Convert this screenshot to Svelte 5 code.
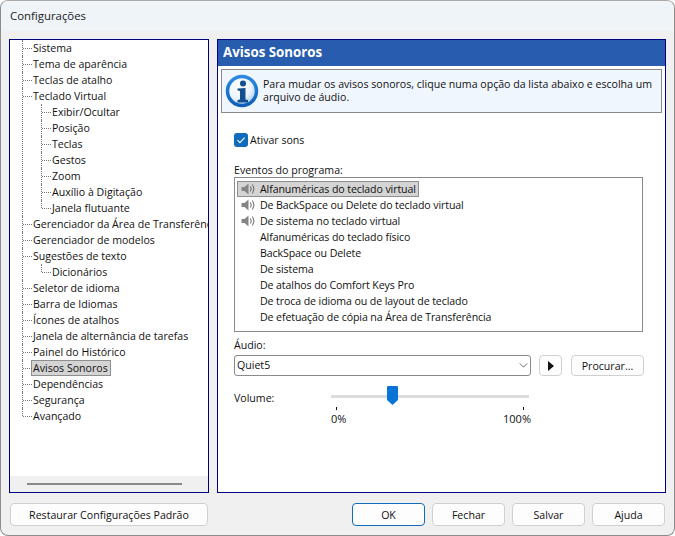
<script>
  // Árvore de categorias da janela
  const tree = [
    { label: 'Sistema' },
    { label: 'Tema de aparência' },
    { label: 'Teclas de atalho' },
    { label: 'Teclado Virtual', children: [
      { label: 'Exibir/Ocultar' },
      { label: 'Posição' },
      { label: 'Teclas' },
      { label: 'Gestos' },
      { label: 'Zoom' },
      { label: 'Auxílio à Digitação' },
      { label: 'Janela flutuante' },
    ] },
    { label: 'Gerenciador da Área de Transferência' },
    { label: 'Gerenciador de modelos' },
    { label: 'Sugestões de texto', children: [{ label: 'Dicionários' }] },
    { label: 'Seletor de idioma' },
    { label: 'Barra de Idiomas' },
    { label: 'Ícones de atalhos' },
    { label: 'Janela de alternância de tarefas' },
    { label: 'Painel do Histórico' },
    { label: 'Avisos Sonoros', selected: true },
    { label: 'Dependências' },
    { label: 'Segurança' },
    { label: 'Avançado' },
  ];

  const events = [
    { label: 'Alfanuméricas do teclado virtual', sound: true, selected: true },
    { label: 'De BackSpace ou Delete do teclado virtual', sound: true },
    { label: 'De sistema no teclado virtual', sound: true },
    { label: 'Alfanuméricas do teclado físico' },
    { label: 'BackSpace ou Delete' },
    { label: 'De sistema' },
    { label: 'De atalhos do Comfort Keys Pro' },
    { label: 'De troca de idioma ou de layout de teclado' },
    { label: 'De efetuação de cópia na Área de Transferência' },
  ];
</script>

{#snippet branch(items)}
  <ul class="branch">
    {#each items as item}
      <li>
        <span class="node" class:selected={item.selected}>{item.label}</span>
        {#if item.children}
          {@render branch(item.children)}
        {/if}
      </li>
    {/each}
  </ul>
{/snippet}

<div class="window">
  <div class="titlebar">Configurações</div>

  <div class="body">
    <div class="main">
      <div class="tree">
        <div class="tree-scroll">
          {@render branch(tree)}
        </div>
        <div class="hscroll"><div class="hthumb"></div></div>
      </div>

      <div class="panel">
        <div class="panel-title">Avisos Sonoros</div>

        <div class="info">
          <svg class="info-icon" viewBox="0 0 34 34" width="34" height="34">
            <defs>
              <radialGradient id="disc" cx="0.4" cy="0.35" r="0.7">
                <stop offset="0" stop-color="#ffffff" />
                <stop offset="0.6" stop-color="#eaf3fc" />
                <stop offset="1" stop-color="#9cc6ec" />
              </radialGradient>
              <linearGradient id="ring" x1="0" y1="0" x2="0" y2="1">
                <stop offset="0" stop-color="#2d8ae0" />
                <stop offset="1" stop-color="#0e5fb8" />
              </linearGradient>
            </defs>
            <circle cx="17" cy="17" r="14.500" fill="url(#disc)" stroke="url(#ring)" stroke-width="3.500" />
            <circle cx="18" cy="9.500" r="3" fill="#14508f" />
            <path d="M12.500 14.500l8-0.500v11.500l2.500 0.500v2.500h-10.500v-2.500l2.500-0.500v-8.500l-2.500-0.500z" fill="#14508f" />
          </svg>
          <p>Para mudar os avisos sonoros, clique numa opção da lista abaixo e escolha um arquivo de áudio.</p>
        </div>

        <div class="content">
          <label class="check">
            <span class="box">
              <svg viewBox="0 0 14 14" width="14" height="14">
                <path d="M3.500 7.200l2.400 2.400 4.700-4.900" fill="none" stroke="#fff" stroke-width="1.100" />
              </svg>
            </span>
            Ativar sons
          </label>

          <div class="field-label events-label">Eventos do programa:</div>
          <div class="listbox">
            {#each events as ev}
              <div class="event" class:selected={ev.selected}>
                <span class="speaker">
                  {#if ev.sound}
                    <svg viewBox="0 0 14 12" width="14" height="12">
                      <path d="M0.500 4h3l4-3.500v11l-4-3.500h-3z" fill="#858585" />
                      <path d="M9.500 3.500q1.500 2.500 0 5M11.500 1.500q3 4.500 0 9" fill="none" stroke="#666" stroke-width="1" />
                    </svg>
                  {/if}
                </span>
                <span class="event-text">{ev.label}</span>
              </div>
            {/each}
          </div>

          <div class="field-label audio-label">Áudio:</div>
          <div class="audio-row">
            <div class="select">
              <span>Quiet5</span>
              <svg viewBox="0 0 10 6" width="9" height="5">
                <path d="M0.500 0.500l4.500 4.500 4.500-4.500" fill="none" stroke="#555" stroke-width="1" />
              </svg>
            </div>
            <button class="btn play" aria-label="Reproduzir">
              <svg viewBox="0 0 6 10" width="6" height="10"><path d="M0 0l6 5-6 5z" fill="#111" /></svg>
            </button>
            <button class="btn browse">Procurar...</button>
          </div>

          <div class="volume">
            <span class="volume-label">Volume:</span>
            <div class="slider">
              <div class="track">
                <svg class="thumb" viewBox="0 0 11 19" width="11" height="19">
                  <path d="M1 0h9a1 1 0 0 1 1 1v13l-5.500 5-5.500-5v-13a1 1 0 0 1 1-1z" fill="#0a74d6" />
                </svg>
              </div>
              <div class="ticks"><i></i><i></i></div>
              <div class="scale"><span>0%</span><span>100%</span></div>
            </div>
          </div>
        </div>
      </div>
    </div>

    <div class="footer">
      <button class="btn restore">Restaurar Configurações Padrão</button>
      <div class="actions">
        <button class="btn action primary">OK</button>
        <button class="btn action">Fechar</button>
        <button class="btn action">Salvar</button>
        <button class="btn action">Ajuda</button>
      </div>
    </div>
  </div>
</div>

<style>
  :global(body) {
    margin: 0;
    background: #fff;
    font-family: "Open Sans", "Noto Sans", sans-serif;
    font-size: 10.600px;
    color: #111;
  }

  .window {
    width: 675px;
    height: 536px;
    box-sizing: border-box;
    border: 1px solid #8c8c8c;
    border-top-color: #a8a8a8;
    border-radius: 8px;
    overflow: hidden;
    display: flex;
    flex-direction: column;
    background: #f0f0f0;
  }

  .titlebar {
    height: 30px;
    flex: none;
    padding: 0 9px;
    line-height: 30px;
    font-size: 11.400px;
    background: #eff4f9;
    color: #222;
  }

  .body {
    flex: 1;
    display: flex;
    flex-direction: column;
    padding: 8px 9px 8px 8px;
    min-height: 0;
  }

  .main {
    display: flex;
    gap: 8px;
    height: 454px;
  }

  .tree {
    width: 200px;
    flex: none;
    box-sizing: border-box;
    border: 1px solid #000080;
    background: #fff;
    display: flex;
    flex-direction: column;
  }

  .tree-scroll {
    flex: 1;
    overflow: hidden;
    white-space: nowrap;
    padding-left: 12px;
  }

  ul.branch {
    list-style: none;
    margin: 0;
    padding: 0;
  }

  ul.branch ul.branch {
    margin-left: 9px;
  }

  ul.branch li {
    position: relative;
    padding-left: 10px;
  }

  /* linhas pontilhadas da árvore */
  ul.branch li::before {
    content: '';
    position: absolute;
    left: 0;
    top: 0;
    bottom: 0;
    border-left: 1px dotted #777;
  }

  ul.branch li:last-child::before {
    bottom: auto;
    height: 8px;
  }

  ul.branch li::after {
    content: '';
    position: absolute;
    left: 1px;
    top: 8px;
    width: 9px;
    border-top: 1px dotted #777;
  }

  .node {
    display: inline-block;
    height: 16px;
    line-height: 17px;
    padding: 0 1px;
    box-sizing: border-box;
    vertical-align: top;
  }

  .node.selected {
    background: #d4d4d4;
    outline: 1px solid #8e8e8e;
    outline-offset: -1px;
    padding: 0 3px 0 2px;
    margin-left: -1px;
  }

  .hscroll {
    height: 16px;
    flex: none;
    background: #f0f0f0;
    display: flex;
    align-items: center;
    padding-left: 17px;
  }

  .hthumb {
    width: 155px;
    height: 2px;
    background: #8a8a8a;
  }

  .panel {
    width: 449px;
    flex: none;
    box-sizing: border-box;
    border: 1px solid #000080;
    background: #fff;
    display: flex;
    flex-direction: column;
  }

  .panel-title {
    height: 26px;
    line-height: 24px;
    padding: 0 5px;
    background: #275cae;
    color: #fff;
    font-weight: 700;
    font-size: 13.300px;
    flex: none;
  }

  .info {
    margin: 3px 3px 0 3px;
    height: 44px;
    box-sizing: border-box;
    border: 1px solid #8a8a8a;
    background: #f0f6fd;
    display: flex;
    align-items: center;
    gap: 4px;
    padding-left: 3px;
  }

  .info-icon {
    flex: none;
  }

  .info p {
    margin: 0;
    line-height: 13px;
    width: 395px;
  }

  .content {
    padding: 19px 20px 0 16px;
  }

  .check {
    display: flex;
    align-items: center;
    gap: 2px;
    height: 16px;
  }

  .box {
    width: 14px;
    height: 14px;
    border-radius: 3px;
    background: #0f6cbd;
    display: block;
  }

  .box svg {
    display: block;
  }

  .field-label {
    height: 14px;
    line-height: 14px;
  }

  .events-label {
    margin-top: 15px;
  }

  .listbox {
    width: 409px;
    height: 155px;
    box-sizing: border-box;
    border: 1px solid #8a8a8a;
    padding: 3px 2px;
  }

  .event {
    display: flex;
    align-items: center;
    height: 16px;
    width: fit-content;
    letter-spacing: -0.100px;
  }

  .event.selected {
    background: #d4d4d4;
    outline: 1px solid #8e8e8e;
    outline-offset: -1px;
  }

  .speaker {
    width: 21px;
    flex: none;
    padding-left: 4px;
    box-sizing: border-box;
    display: flex;
  }

  .event-text {
    height: 16px;
    line-height: 17px;
    padding: 0 3px 0 2px;
    box-sizing: border-box;
  }

  .audio-label {
    margin-top: 6px;
  }

  .audio-row {
    display: flex;
    align-items: center;
    margin-top: 3px;
    height: 21px;
  }

  .select {
    width: 297px;
    height: 21px;
    box-sizing: border-box;
    border: 1px solid #8a8a8a;
    border-radius: 3px;
    display: flex;
    align-items: center;
    justify-content: space-between;
    padding: 0 2px 1px 2px;
  }

  .btn {
    font: inherit;
    color: inherit;
    background: #fdfdfd;
    border: 1px solid #d0d0d0;
    border-radius: 4px;
    padding: 0;
    box-sizing: border-box;
  }

  .play {
    width: 23px;
    height: 21px;
    margin-left: 8px;
    display: flex;
    align-items: center;
    justify-content: center;
  }

  .browse {
    width: 73px;
    height: 21px;
    margin-left: 9px;
  }

  .volume {
    display: flex;
    margin-top: 10px;
  }

  .volume-label {
    width: 97px;
    flex: none;
    line-height: 24px;
  }

  .slider {
    width: 198px;
  }

  .track {
    position: relative;
    height: 3px;
    margin-top: 9px;
    background: #dcdcdc;
  }

  .thumb {
    position: absolute;
    left: 56px;
    top: -9px;
    display: block;
  }

  .ticks {
    display: flex;
    justify-content: space-between;
    padding: 0 5px;
    margin-top: 9px;
  }

  .ticks i {
    width: 1px;
    height: 3px;
    background: #111;
  }

  .scale {
    display: flex;
    justify-content: space-between;
    margin-top: 2px;
    line-height: 14px;
    margin-right: -2px;
    font-size: 11px;
  }

  .footer {
    display: flex;
    justify-content: space-between;
    margin-top: 10px;
  }

  .restore {
    width: 198px;
    height: 23px;
    margin-left: 1px;
  }

  .actions {
    display: flex;
    gap: 7px;
  }

  .action {
    width: 73px;
    height: 23px;
  }

  .action.primary {
    border: 1px solid #0f6cbd;
  }
</style>
